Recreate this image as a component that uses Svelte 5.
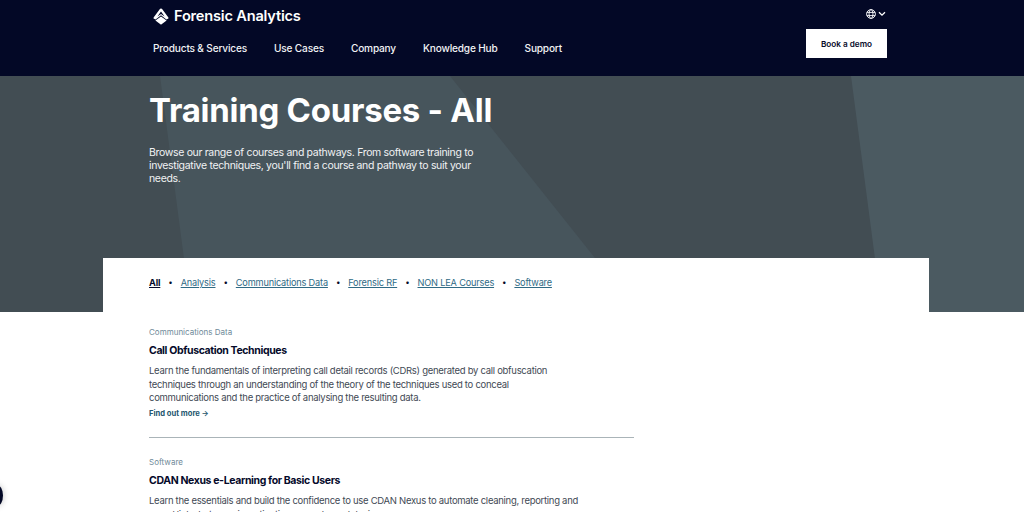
<script>
  const navItems = ['Products & Services', 'Use Cases', 'Company', 'Knowledge Hub', 'Support'];
  const filters = ['Analysis', 'Communications Data', 'Forensic RF', 'NON LEA Courses', 'Software'];
</script>

<header class="site-header">
  <div class="header-inner">
    <div class="header-left">
      <a class="logo" href="#top">
        <svg width="16" height="17" viewBox="0 0 16 17">
          <path d="M8 0.5 C8.6 0.5 9 0.8 9.3 1.2 L15.2 9.2 C15.7 9.9 15.6 10.6 15 10.8 L13.4 11.4 L8 7.2 L2.6 11.4 L1 10.8 C0.4 10.6 0.3 9.9 0.8 9.2 L6.7 1.2 C7 0.8 7.4 0.5 8 0.5 Z" fill="#fff" />
          <path d="M8 3.6 L4.4 8.6 L8 5.9 L11.6 8.6 Z" fill="#030826" />
          <path d="M8 8.4 L13.6 12.6 L8.6 16.2 C8.2 16.5 7.8 16.5 7.4 16.2 L2.4 12.6 Z" fill="#fff" />
        </svg>
        <span>Forensic Analytics</span>
      </a>
      <nav class="main-nav">
        {#each navItems as item}
          <a href="#top">{item}</a>
        {/each}
      </nav>
    </div>
    <div class="header-right">
      <div class="lang">
        <svg width="10" height="10" viewBox="0 0 10 10" fill="none" stroke="#fff" stroke-width="0.9">
          <circle cx="5" cy="5" r="4.4" />
          <ellipse cx="5" cy="5" rx="2" ry="4.4" />
          <path d="M0.8 3.4H9.2M0.8 6.6H9.2" />
        </svg>
        <svg width="8" height="6" viewBox="0 0 8 6" fill="none" stroke="#fff" stroke-width="1.3">
          <path d="M1 1.2 L4 4.2 L7 1.2" />
        </svg>
      </div>
      <a class="demo" href="#top">Book a demo</a>
    </div>
  </div>
</header>

<section class="hero">
  <svg class="hero-shapes" viewBox="0 0 1024 236" preserveAspectRatio="none">
    <polygon points="160,0 450,0 638,236 191,236" fill="#47555c" />
    <polygon points="851,0 1024,0 1024,236 882,236" fill="#4b5a61" />
  </svg>
  <div class="hero-text">
    <h1>Training Courses - All</h1>
    <p>Browse our range of courses and pathways. From software training to investigative techniques, you'll find a course and pathway to suit your needs.</p>
  </div>
</section>

<div class="filter-card">
  <a class="filter current" href="#top">All</a>
  {#each filters as filter}
    <span class="dot">•</span>
    <a class="filter" href="#top">{filter}</a>
  {/each}
</div>

<main class="courses">
  <article class="course">
    <div class="category">Communications Data</div>
    <h2>Call Obfuscation Techniques</h2>
    <p>Learn the fundamentals of interpreting call detail records (CDRs) generated by call obfuscation techniques through an understanding of the theory of the techniques used to conceal communications and the practice of analysing the resulting data.</p>
    <a class="more" href="#top">Find out more →</a>
  </article>
  <article class="course">
    <div class="category">Software</div>
    <h2>CDAN Nexus e-Learning for Basic Users</h2>
    <p>Learn the essentials and build the confidence to use CDAN Nexus to automate cleaning, reporting and reveal links between investigations, people, and devices.</p>
  </article>
</main>

<div class="corner-badge"></div>

<style>
  :global(body) {
    margin: 0;
    background: #fff;
    font-family: Inter, "Noto Sans", sans-serif;
    color: #050a2a;
    height: 512px;
    overflow: hidden;
  }

  a {
    text-decoration: none;
    color: inherit;
  }

  .site-header {
    height: 76px;
    background: #030826;
    box-sizing: border-box;
  }

  .header-inner {
    width: 734px;
    margin-left: 153px;
    display: flex;
    justify-content: space-between;
  }

  .logo {
    display: flex;
    align-items: center;
    gap: 5px;
    height: 32px;
    color: #fff;
    font-size: 14.6px;
    font-weight: 600;
    letter-spacing: -0.2px;
  }

  .main-nav {
    display: flex;
    gap: 27px;
    margin-top: 8px;
    color: #f1f2f5;
    font-size: 10.1px;
    font-weight: 500;
    letter-spacing: -0.17px;
    line-height: 16px;
  }

  .header-right {
    display: flex;
    flex-direction: column;
    align-items: flex-end;
  }

  .lang {
    display: flex;
    align-items: center;
    gap: 2px;
    height: 28px;
    margin-right: 1px;
  }

  .demo {
    width: 81px;
    height: 29px;
    display: flex;
    align-items: center;
    justify-content: center;
    background: #fff;
    color: #050a2a;
    font-size: 8.2px;
    font-weight: 600;
    margin-top: 1px;
  }

  .hero {
    position: relative;
    height: 236px;
    background: #424d53;
    overflow: hidden;
  }

  .hero-shapes {
    position: absolute;
    inset: 0;
    width: 100%;
    height: 100%;
  }

  .hero-text {
    position: relative;
    margin-left: 149px;
    width: 345px;
    color: #fff;
  }

  .hero h1 {
    margin: 14px 0 0;
    font-size: 33px;
    line-height: 40px;
    font-weight: 700;
    letter-spacing: -0.26px;
  }

  .hero p {
    margin: 16px 0 0;
    font-size: 10.5px;
    line-height: 13px;
    letter-spacing: -0.33px;
    color: #f1f2f4;
  }

  .filter-card {
    position: relative;
    margin: -54px 95px 0 103px;
    height: 54px;
    background: #fff;
    box-sizing: border-box;
    padding: 18px 0 0 46px;
    display: flex;
    align-items: flex-start;
    gap: 8px;
    font-size: 9.2px;
    letter-spacing: -0.18px;
    line-height: 13px;
  }

  .filter {
    color: #2f6a85;
    text-decoration: underline;
  }

  .filter.current {
    color: #050a2a;
    font-weight: 700;
  }

  .dot {
    font-size: 8px;
    color: #050a2a;
  }

  .courses {
    margin-left: 149px;
    width: 485px;
    padding-top: 14px;
  }

  .course {
    height: 111px;
    border-bottom: 1px solid #aab4b8;
    margin-bottom: 18px;
  }

  .course:last-child {
    border-bottom: none;
  }

  .category {
    font-size: 8px;
    line-height: 12px;
    color: #6f8a99;
  }

  h2 {
    margin: 6px 0 0;
    font-size: 10.5px;
    line-height: 14px;
    font-weight: 700;
    letter-spacing: -0.37px;
    color: #050a2a;
  }

  .course p {
    margin: 6px 0 0;
    width: 430px;
    font-size: 9.5px;
    line-height: 13.7px;
    letter-spacing: -0.29px;
    color: #3f4a55;
  }

  .more {
    display: block;
    margin-top: 3px;
    font-size: 7.6px;
    line-height: 12px;
    font-weight: 700;
    color: #23566e;
  }

  .corner-badge {
    position: absolute;
    left: -9px;
    top: 485px;
    width: 12px;
    height: 21px;
    border-radius: 50%;
    background: #030826;
    box-shadow: 0 0 6px rgba(0, 0, 0, 0.25);
  }
</style>
